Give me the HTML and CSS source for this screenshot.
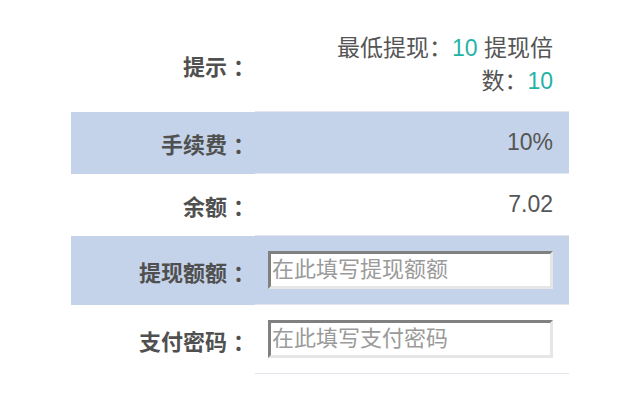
FILE: index.html
```html
<!DOCTYPE html>
<html lang="zh-CN">
<head>
    <meta charset="UTF-8">
    <meta name="viewport" content="width=device-width, initial-scale=1.0">
    <title>提现</title>
    <link rel="stylesheet" href="styles.css">
</head>
<body>
    <div class="withdraw">
        <div class="row row-tip">
            <div class="label">提示<span class="colon">：</span></div>
            <div class="value"><span class="text">最低提现：<span class="num">10</span> 提现倍数：<span class="num">10</span></span></div>
        </div>
        <div class="row row-blue">
            <div class="label">手续费<span class="colon">：</span></div>
            <div class="value"><span class="text">10%</span></div>
        </div>
        <div class="row">
            <div class="label">余额<span class="colon">：</span></div>
            <div class="value"><span class="text">7.02</span></div>
        </div>
        <div class="row row-blue row-input">
            <div class="label">提现额额<span class="colon">：</span></div>
            <div class="value"><input type="text" placeholder="在此填写提现额额"></div>
        </div>
        <div class="row row-input">
            <div class="label">支付密码<span class="colon">：</span></div>
            <div class="value"><input type="password" placeholder="在此填写支付密码"></div>
        </div>
    </div>
</body>
</html>
```

FILE: styles.css
```css
body {
    font-family: "Liberation Sans", "Noto Sans CJK SC", sans-serif;
    background-color: #fff;
    margin: 0;
    padding: 0;
}
.withdraw {
    width: 498px;
    margin-left: 71px;
    padding-top: 18px;
}
.row {
    display: grid;
    grid-template-columns: 184px 314px;
    height: 62px;
}
.row-tip {
    height: 94px;
}
.row-blue {
    background-color: #c4d3e9;
}
.row-input {
    height: 69px;
}
.label {
    display: flex;
    align-items: center;
    justify-content: flex-end;
    padding-right: 0;
    font-family: "Noto Sans CJK SC", sans-serif;
    font-size: 22px;
    font-weight: bold;
    color: #505050;
}
.colon {
    margin-left: 6px;
}
.value {
    display: flex;
    align-items: center;
    justify-content: flex-end;
    padding: 0 16px 0 70px;
    font-size: 23px;
    line-height: 33px;
    color: #555;
    border-bottom: 1px solid #e2e6ec;
}
.text {
    display: block;
    text-align: right;
}
.num {
    color: #1fb3a6;
}
.row-input .value {
    justify-content: flex-start;
    padding: 0 16px 0 13px;
}
input {
    box-sizing: border-box;
    width: 285px;
    height: 38px;
    padding: 0 1px;
    font-family: "Liberation Sans", "Noto Sans CJK SC", sans-serif;
    font-size: 22px;
    color: #555;
    background-color: #fff;
    border: 3px solid #e6e6e6;
    border-top-color: #808080;
    border-left-color: #808080;
    outline: none;
}
input::placeholder {
    color: #9a9a9a;
}
```
